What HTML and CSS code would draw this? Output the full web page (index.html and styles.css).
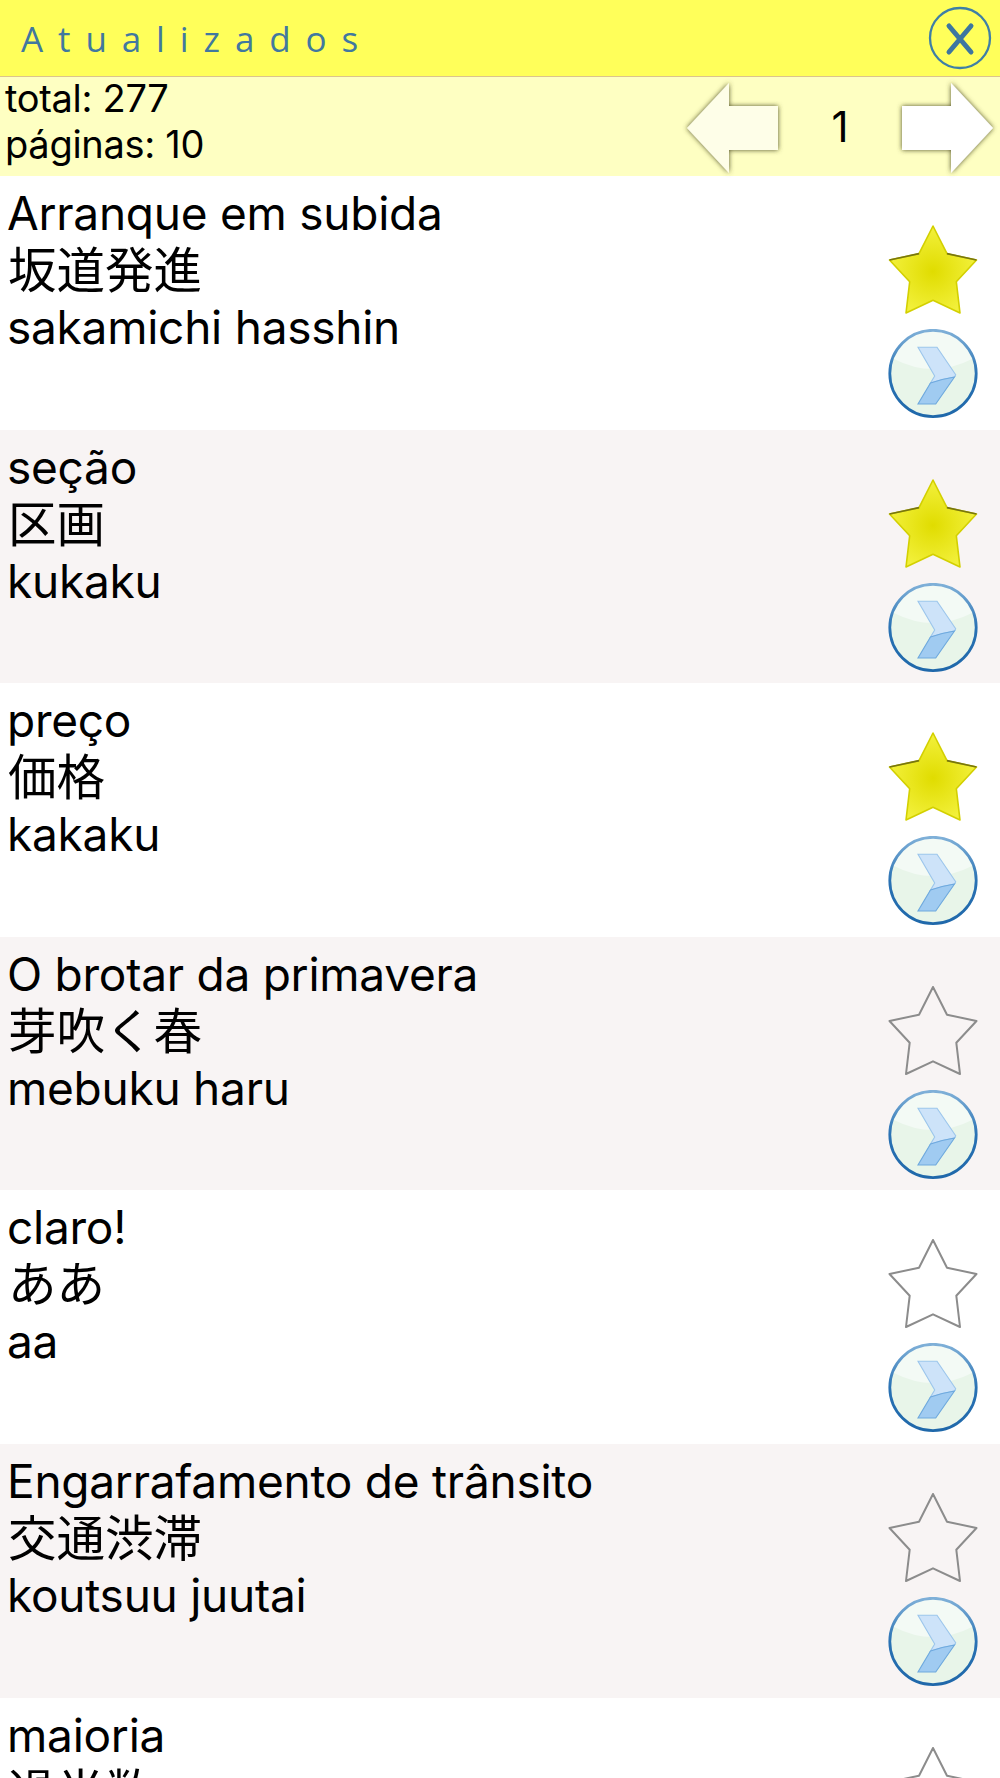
FILE: index.html
```html
<!DOCTYPE html>
<html lang="pt">
<head>
    <meta charset="UTF-8">
    <title>Atualizados</title>
    <link rel="stylesheet" href="styles.css">
</head>
<body>

<svg class="defs" width="0" height="0">
    <defs>
        <radialGradient id="star-fill" cx="50%" cy="52%" r="50%">
            <stop offset="0" stop-color="#e0dc00"/>
            <stop offset="1" stop-color="#f2f03a"/>
        </radialGradient>
        <linearGradient id="ring" x1="0" y1="0" x2="0" y2="1">
            <stop offset="0" stop-color="#7fb0d8"/>
            <stop offset="0.5" stop-color="#2a72b4"/>
            <stop offset="1" stop-color="#1f68aa"/>
        </linearGradient>
        <filter id="arrow-shade" x="-15%" y="-15%" width="130%" height="130%">
            <feGaussianBlur in="SourceGraphic" stdDeviation="0.7" result="soft"/>
            <feDropShadow in="soft" dx="0" dy="0" stdDeviation="2.6" flood-color="#4f4f22" flood-opacity="1"/>
        </filter>
        <symbol id="star-on" viewBox="0 0 90 90">
            <path d="M45 1 L59 28.7 L88.5 35 L68.3 56.7 L72 88 L45 75.3 L18 88 L21.7 56.7 L1.5 35 L31 28.7 Z" fill="url(#star-fill)" stroke="#d3d000" stroke-width="1.6" stroke-linejoin="round"/>
            <path d="M59 28.7 L88.5 35 M1.5 35 L31 28.7" stroke="#77750f" stroke-width="1.7" fill="none"/>
        </symbol>
        <symbol id="star-off" viewBox="0 0 90 90">
            <path d="M45 1 L59 28.7 L88.5 35 L68.3 56.7 L72 88 L45 75.3 L18 88 L21.7 56.7 L1.5 35 L31 28.7 Z" fill="none" stroke="#8c8c8c" stroke-width="2" stroke-linejoin="round"/>
        </symbol>
        <symbol id="go" viewBox="0 0 90 90">
            <circle cx="45" cy="44.5" r="43.2" fill="#e8f5e9"/>
            <path d="M6 30 A41 41 0 0 1 84 30 Q45 50 6 30 Z" fill="#f3faf5"/>
            <circle cx="45" cy="44.5" r="43.2" fill="none" stroke="url(#ring)" stroke-width="2.8"/>
            <path d="M30 18.3 H49 L67.7 45.7 L66.5 48 Q54 50 42.5 54 L46.7 47 Z" fill="#cde3f9" stroke="#9cc6ec" stroke-width="1.1"/>
            <path d="M42.5 54 Q54 50 66.5 48 L47.7 75 H30 Z" fill="#a0cbf1" stroke="#6ea9de" stroke-width="1.1"/>
        </symbol>
    </defs>
</svg>

<div class="topbar">
    <h1 class="title">Atualizados</h1>
    <svg class="close" width="64" height="64" viewBox="0 0 64 64">
        <circle cx="32" cy="32" r="30" fill="none" stroke="#3f7fa6" stroke-width="2.3"/>
        <path d="M21 20 L43 46 M43 20 L21 46" stroke="#3d76a0" stroke-width="5" stroke-linecap="round"/>
    </svg>
</div>

<div class="pager">
    <div class="counts">
        <div>total: 277</div>
        <div>páginas: 10</div>
    </div>
    <div class="pager-nav">
        <svg class="arrow" width="96" height="92" viewBox="0 0 96 92">
            <path d="M1 46 L43 1 V24 H92 V68 H43 V91 Z" fill="#fefee8" filter="url(#arrow-shade)"/>
        </svg>
        <span class="page-num">1</span>
        <svg class="arrow" width="96" height="92" viewBox="0 0 96 92">
            <path d="M95 46 L53 1 V24 H4 V68 H53 V91 Z" fill="#fff" filter="url(#arrow-shade)"/>
        </svg>
    </div>
</div>

<div class="list">
    <div class="row">
        <div class="words">
            <div>Arranque em subida</div>
            <div class="jp">坂道発進</div>
            <div>sakamichi hasshin</div>
        </div>
        <div class="icons">
            <svg class="icon"><use href="#star-on"/></svg>
            <svg class="icon"><use href="#go"/></svg>
        </div>
    </div>
    <div class="row">
        <div class="words">
            <div>seção</div>
            <div class="jp">区画</div>
            <div>kukaku</div>
        </div>
        <div class="icons">
            <svg class="icon"><use href="#star-on"/></svg>
            <svg class="icon"><use href="#go"/></svg>
        </div>
    </div>
    <div class="row">
        <div class="words">
            <div>preço</div>
            <div class="jp">価格</div>
            <div>kakaku</div>
        </div>
        <div class="icons">
            <svg class="icon"><use href="#star-on"/></svg>
            <svg class="icon"><use href="#go"/></svg>
        </div>
    </div>
    <div class="row">
        <div class="words">
            <div>O brotar da primavera</div>
            <div class="jp">芽吹く春</div>
            <div>mebuku haru</div>
        </div>
        <div class="icons">
            <svg class="icon"><use href="#star-off"/></svg>
            <svg class="icon"><use href="#go"/></svg>
        </div>
    </div>
    <div class="row">
        <div class="words">
            <div>claro!</div>
            <div class="jp">ああ</div>
            <div>aa</div>
        </div>
        <div class="icons">
            <svg class="icon"><use href="#star-off"/></svg>
            <svg class="icon"><use href="#go"/></svg>
        </div>
    </div>
    <div class="row">
        <div class="words">
            <div>Engarrafamento de trânsito</div>
            <div class="jp">交通渋滞</div>
            <div>koutsuu juutai</div>
        </div>
        <div class="icons">
            <svg class="icon"><use href="#star-off"/></svg>
            <svg class="icon"><use href="#go"/></svg>
        </div>
    </div>
    <div class="row">
        <div class="words">
            <div>maioria</div>
            <div class="jp">過半数</div>
            <div>kahansuu</div>
        </div>
        <div class="icons">
            <svg class="icon"><use href="#star-off"/></svg>
            <svg class="icon"><use href="#go"/></svg>
        </div>
    </div>
</div>

</body>
</html>
```

FILE: styles.css
```css
html, body {
    margin: 0;
    padding: 0;
    height: 1778px;
    overflow: hidden;
    background-color: #fff;
}

body {
    font-family: Inter, "Noto Sans CJK JP", sans-serif;
    color: #000;
}

.defs {
    display: block;
    height: 0;
}

.topbar {
    height: 76px;
    background-color: #ffff5a;
    border-bottom: 1px solid #dcc48c;
    display: flex;
    align-items: center;
    justify-content: space-between;
    padding: 0 8px 0 21px;
}

.title {
    margin: 0;
    font-family: "Open Sans", sans-serif;
    font-size: 35px;
    font-weight: 400;
    letter-spacing: 14.9px;
    color: #41789f;
}

.pager {
    height: 99px;
    background-color: #feffc2;
    display: flex;
    align-items: center;
    justify-content: space-between;
    padding: 0 6px 0 5px;
}

.counts {
    font-size: 38px;
    letter-spacing: -0.3px;
    line-height: 46px;
    margin-bottom: 12px;
}

.pager-nav {
    display: flex;
    align-items: center;
    margin-top: 3px;
}

.arrow {
    display: block;
    overflow: visible;
}

.page-num {
    width: 116px;
    text-align: center;
    font-size: 42px;
    margin-top: -3px;
}

.list {
    display: flex;
    flex-direction: column;
}

.row {
    height: 253.6px;
    flex: none;
    display: flex;
    justify-content: space-between;
    padding: 9px 22px 0 7px;
    box-sizing: border-box;
}

.row:nth-child(even) {
    background-color: #f8f4f4;
}

.words {
    font-size: 46px;
    letter-spacing: -0.25px;
    line-height: 57px;
}

.words .jp {
    font-size: 48.5px;
    letter-spacing: 0;
    margin-left: 1px;
}

.icons {
    display: flex;
    flex-direction: column;
    gap: 14px;
    padding-top: 40px;
}

.icon {
    display: block;
    width: 90px;
    height: 90px;
}
```
